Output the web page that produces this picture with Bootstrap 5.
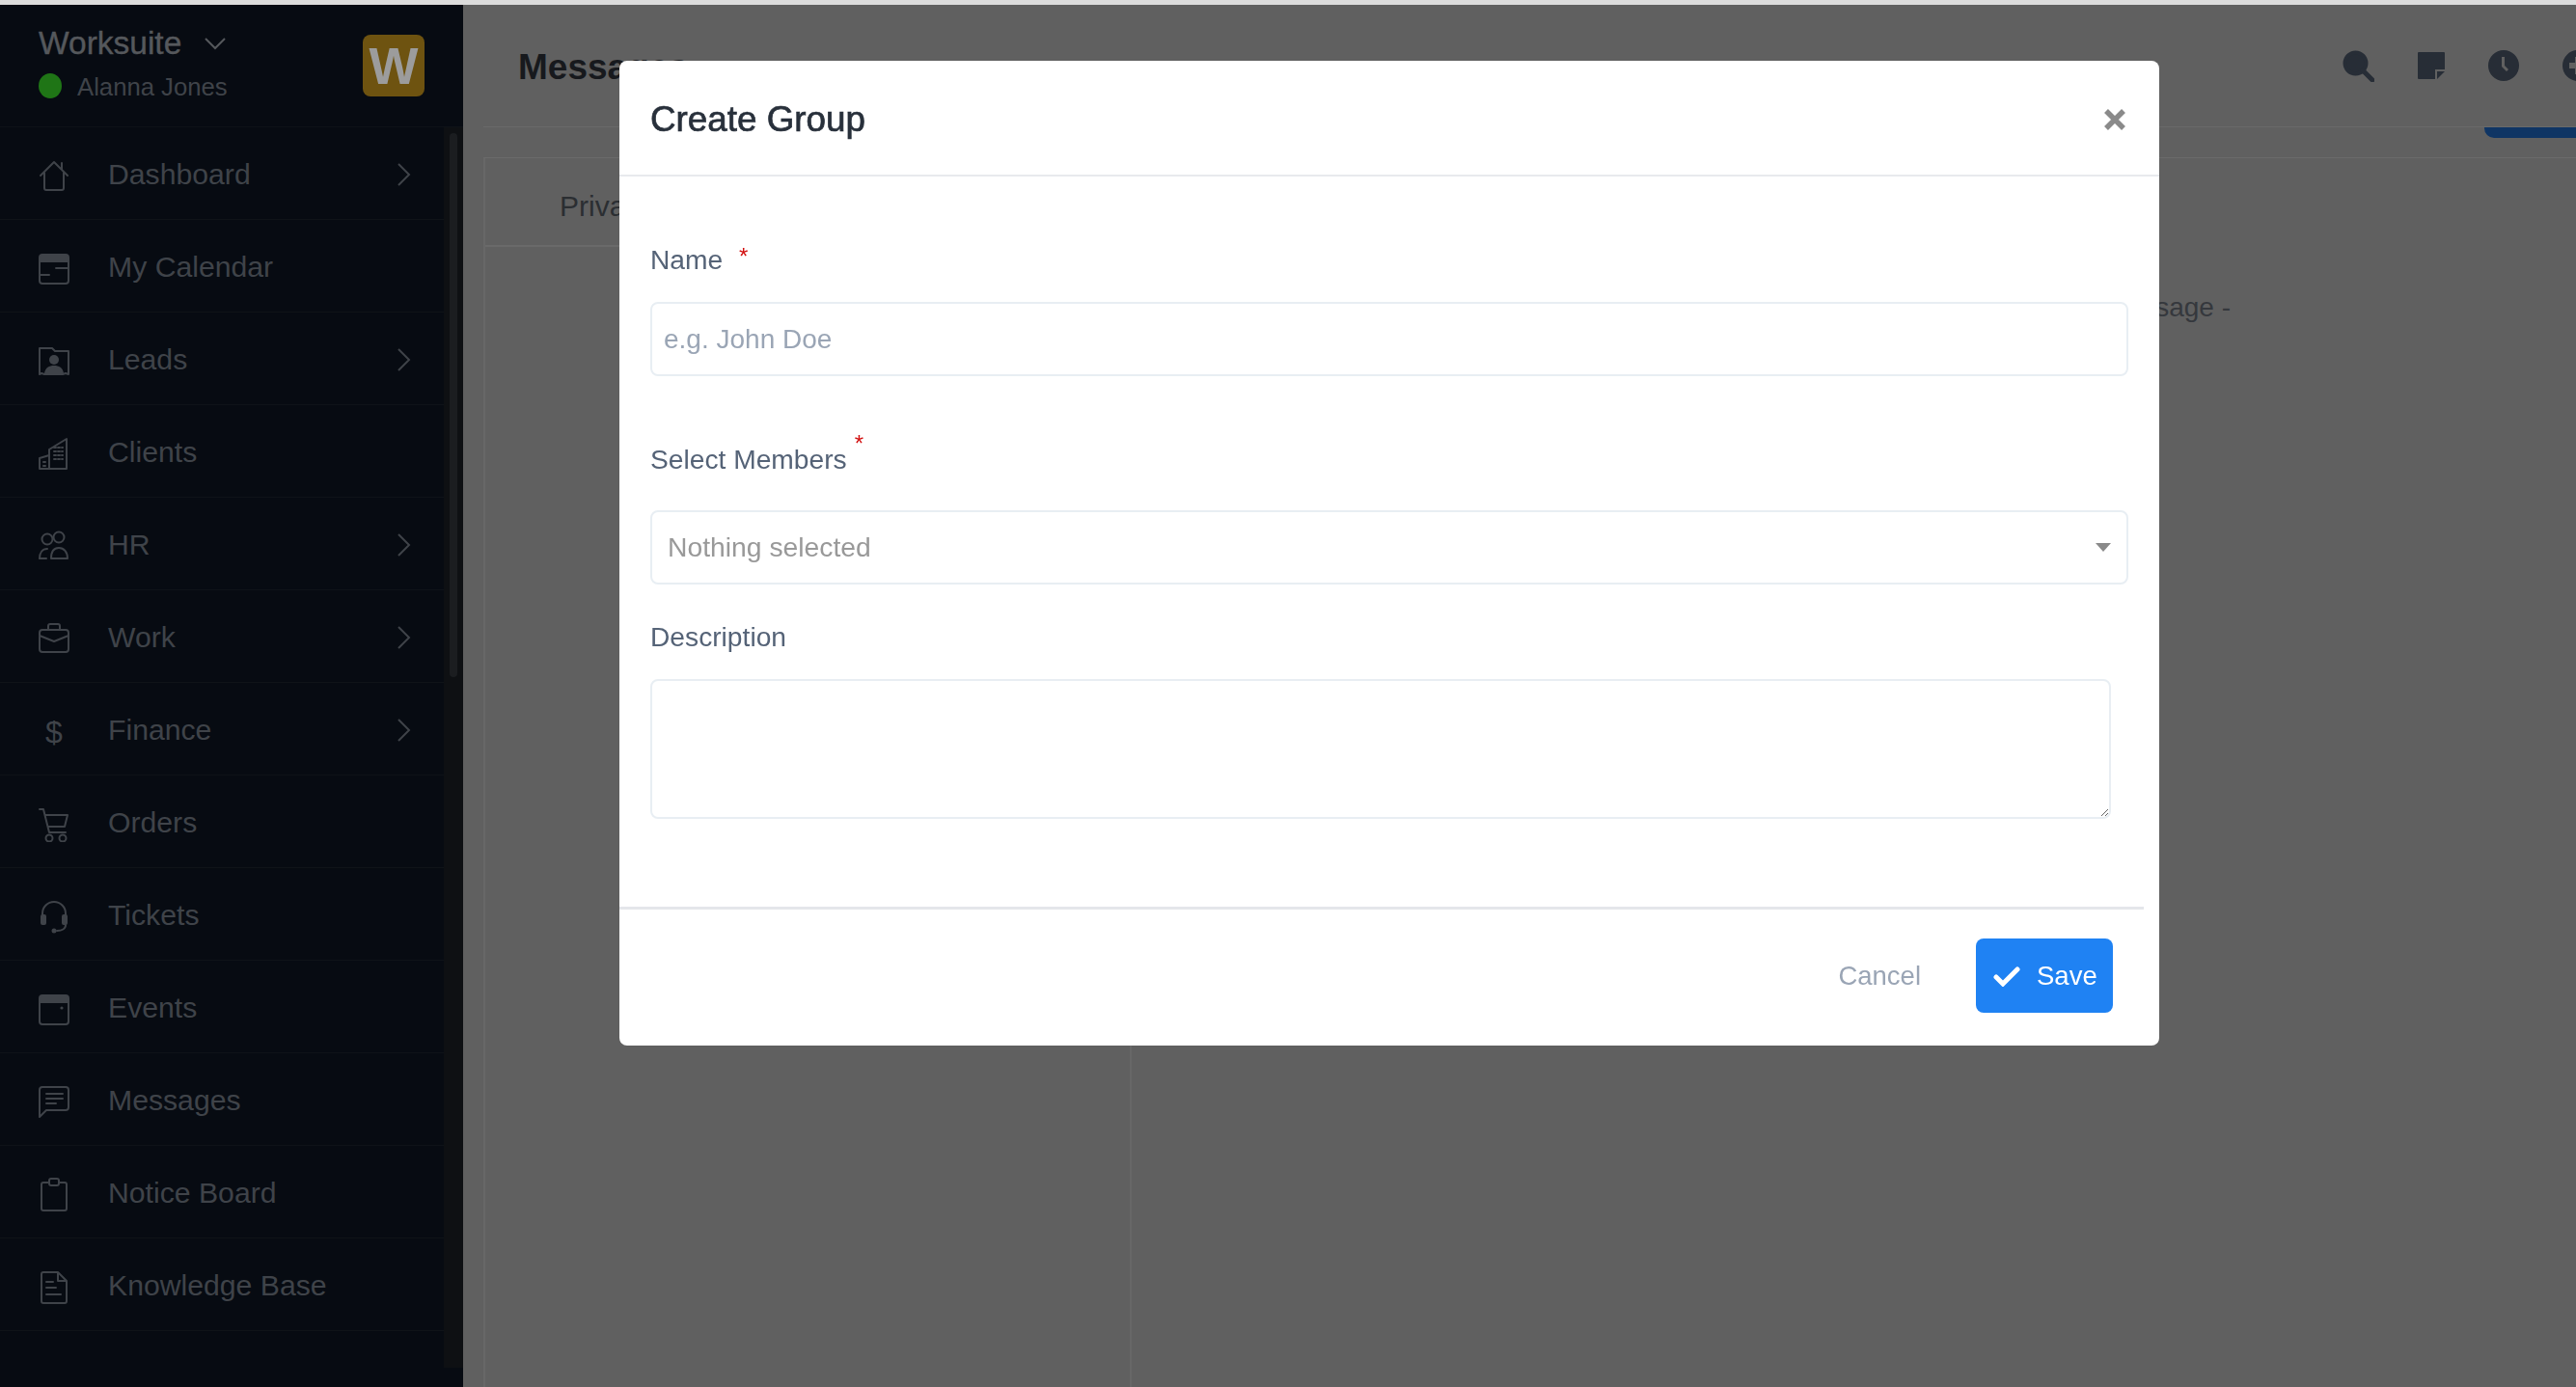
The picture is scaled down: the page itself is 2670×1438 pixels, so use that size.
<!DOCTYPE html>
<html lang="en">
<head>
<meta charset="utf-8">
<title>Create Group</title>
<link href="https://cdn.jsdelivr.net/npm/bootstrap@5.3.0/dist/css/bootstrap.min.css" rel="stylesheet">
<style>
html,body{height:1438px;overflow:hidden}
body{background:#606060;font-family:"Liberation Sans",Arial,sans-serif;font-size:28px;color:#3c3f44}
.topstrip{height:5px;background:#dcdcdc}
.shell{height:1433px}
.sidebox{width:480px;background:#070b12;flex:none}
.sidehead{height:127px;padding:0 40px;border-bottom:1px solid #0e1218}
.brandname{font-size:33.5px;line-height:40px;color:#55585c;-webkit-text-stroke:.4px #55585c;padding-top:2px}
.username{font-size:25.7px;line-height:30px;color:#3f4349;margin-top:10px}
.onlinedot{width:24px;height:26px;border-radius:50%;background:#1f7516;margin-right:16px;margin-top:-3px}
.brandlogo{width:64px;height:64px;border-radius:8px;background:#6e5310;color:#9c9c9c;font-size:54px;line-height:64px;text-align:center;font-family:"Liberation Sans",sans-serif;font-weight:700}
.navwrap{height:1286px;background:#0e1013}
.navlist{width:460px;background:#070b12}
.navrow{height:96px;border-bottom:1px solid #0f1318;padding:2px 34px 0 40px;color:#3f4349;font-size:30.2px}
.navico{width:32px;height:36px;margin-top:5px;margin-right:40px;flex:none;fill:none;stroke:#3f4349;stroke-width:2;stroke-linecap:round;stroke-linejoin:round}
.navico .solid{fill:#3f4349;stroke:none}
.dollar{width:32px;margin-top:5px;margin-right:40px;text-align:center;font-size:32px;flex:none;line-height:36px}
.thumbtrack{width:20px;padding:6px 6px 0}
.thumb{height:564px;width:8px;border-radius:4px;background:#1b1d20}
.mainbox{min-width:0;overflow:hidden}
.mainhead{height:126px;padding:4px 0 0 57px}
.pagetitle{font-size:37px;font-weight:700;color:#17191d;margin:0;line-height:1.2}
.topicons{margin-right:-18px;gap:45px;padding-bottom:4px}
.topic{fill:#272d36;flex:none}
.tabbar{height:33px;margin-left:21px;border-top:1px solid #6a6a6a;border-bottom:1px solid #6a6a6a}
.bluetab{width:95px;height:11px;background:#0f3564;border-radius:0 0 0 10px}
.contentrow{height:1274px;margin-left:21px}
.leftcol{width:672px;border-left:2px solid #676767;border-right:2px solid #676767;flex:none}
.privrow{height:92px;border-bottom:2px solid #6a6a6a;padding-left:77px;color:#2b2e32;font-size:30px;line-height:100px}
.rightcol{padding:134px 358px 0 0;color:#35383d;font-size:28px;line-height:42px}
.groupmodal{position:fixed;left:642px;top:63px;width:1596px;height:1021px;z-index:1055;background:#fff;border-radius:8px;overflow:hidden}
.grouphead{height:120px;padding:4px 35px 0 32px;border-bottom:2px solid #e8eaed}
.grouptitle{font-size:36.8px;font-weight:400;-webkit-text-stroke:.7px #28303b;color:#28303b;margin:0;line-height:1.2}
.xbtn{border:0;background:none;padding:0;line-height:0}
.groupbody{padding:69px 32px 0 32px;height:757px}
.fieldlabel{display:block;font-size:28.2px;line-height:34px;color:#556377;margin:0}
.req{color:#d21010;font-size:24px;line-height:1;position:relative;top:-5px;margin-left:9px}
.req2{margin-left:8px;top:-18px}
.fieldinput{height:77px;border:2px solid #e8eef3;border-radius:8px;font-size:28px;padding:0 12px;color:#28303b;box-shadow:none}
.fieldinput::placeholder{color:#9aa5b5}
.pickbtn{height:77px;width:100%;border:2px solid #e8eef3;border-radius:8px;background:#fff;color:#999;font-size:28.3px;padding:0 16px;text-align:left}
.pickbtn::after{border-top:.32em solid #8a8a8a;border-right:.29em solid transparent;border-left:.29em solid transparent;border-bottom:0;margin:0}
.areainput{width:1514px;height:145px;border:2px solid #e8eef3;border-radius:8px;display:block;box-shadow:none}
.gap27{margin-top:27px}.gap36{margin-top:36px}.gap37{margin-top:37px}.gap68{margin-top:69px}
.groupfoot{height:144px;margin-right:16px;border-top:3px solid #e4e6ea;padding:30px 32px 0 0;gap:57px}
.cancellink{color:#9aa5b5;font-size:27.5px;line-height:77px;text-decoration:none}
.savebtn{width:142px;height:77px;background:#1f82f3;border:0;border-radius:8px;color:#fff;font-size:27.5px;padding:0 0 0 18px;gap:17px}
</style>
</head>
<body>
<div class="topstrip"></div>
<div class="shell d-flex">
  <aside class="sidebox">
    <div class="sidehead d-flex justify-content-between align-items-center">
      <div class="mb-2">
        <div class="brandname d-flex align-items-center">Worksuite
          <svg class="ms-4" width="22" height="14" viewBox="0 0 22 14" fill="none" stroke="#55585c" stroke-width="2"><path d="M1 2l10 10L21 2"/></svg>
        </div>
        <div class="username d-flex align-items-center"><span class="onlinedot"></span>Alanna Jones</div>
      </div>
      <div class="brandlogo">W</div>
    </div>
    <div class="navwrap d-flex">
      <nav class="navlist">
        <a class="navrow d-flex align-items-center text-decoration-none">
          <svg class="navico" viewBox="0 0 32 36"><path d="M2 17L16 3l14 14M6 14v16a2 2 0 0 0 2 2h16a2 2 0 0 0 2-2V14M24 4v7"/></svg>
          <span class="flex-grow-1">Dashboard</span>
          <svg width="14" height="24" viewBox="0 0 14 24" fill="none" stroke="#3f4349" stroke-width="2"><path d="M1 1l11 11L1 23"/></svg>
        </a>
        <a class="navrow d-flex align-items-center text-decoration-none">
          <svg class="navico" viewBox="0 0 32 36"><rect x="1" y="3" width="30" height="30" rx="3"/><path class="solid" d="M1 6a3 3 0 0 1 3-3h24a3 3 0 0 1 3 3v5H1z"/><path d="M18 17h12M2 24h9"/></svg>
          <span class="flex-grow-1">My Calendar</span>
        </a>
        <a class="navrow d-flex align-items-center text-decoration-none">
          <svg class="navico" viewBox="0 0 32 36"><path d="M1 31V4h13l3 3h14v24l-3-1-3 1H6l-3-1z"/><circle class="solid" cx="16" cy="16" r="5"/><path class="solid" d="M6 30c1-6 5-8 10-8s9 2 10 8z"/></svg>
          <span class="flex-grow-1">Leads</span>
          <svg width="14" height="24" viewBox="0 0 14 24" fill="none" stroke="#3f4349" stroke-width="2"><path d="M1 1l11 11L1 23"/></svg>
        </a>
        <a class="navrow d-flex align-items-center text-decoration-none">
          <svg class="navico" viewBox="0 0 32 36"><path d="M1 33V22l10-3v14M11 33V13L29 2v31H1"/><path d="M16 15h9M16 19h9M16 23h9M16 11h9M5 26h3M5 30h3" stroke-dasharray="2 2"/></svg>
          <span class="flex-grow-1">Clients</span>
        </a>
        <a class="navrow d-flex align-items-center text-decoration-none">
          <svg class="navico" viewBox="0 0 32 36"><circle cx="9" cy="10" r="5.5"/><circle cx="21" cy="8" r="5.5"/><path d="M1 30c0-6 3-10 8-10M13 30c0-7 3-11 8-11s9 4 9 11z"/><path d="M1 30h7"/></svg>
          <span class="flex-grow-1">HR</span>
          <svg width="14" height="24" viewBox="0 0 14 24" fill="none" stroke="#3f4349" stroke-width="2"><path d="M1 1l11 11L1 23"/></svg>
        </a>
        <a class="navrow d-flex align-items-center text-decoration-none">
          <svg class="navico" viewBox="0 0 32 36"><rect x="1" y="8" width="30" height="23" rx="3"/><path d="M10 8V4a2 2 0 0 1 2-2h8a2 2 0 0 1 2 2v4M1 14l15 6 15-6"/></svg>
          <span class="flex-grow-1">Work</span>
          <svg width="14" height="24" viewBox="0 0 14 24" fill="none" stroke="#3f4349" stroke-width="2"><path d="M1 1l11 11L1 23"/></svg>
        </a>
        <a class="navrow d-flex align-items-center text-decoration-none">
          <span class="dollar">$</span>
          <span class="flex-grow-1">Finance</span>
          <svg width="14" height="24" viewBox="0 0 14 24" fill="none" stroke="#3f4349" stroke-width="2"><path d="M1 1l11 11L1 23"/></svg>
        </a>
        <a class="navrow d-flex align-items-center text-decoration-none">
          <svg class="navico" viewBox="0 0 32 36"><path d="M1 2h4l6 24h17M7 8h23l-3 12H10"/><circle cx="11" cy="32" r="3.5"/><circle cx="25" cy="32" r="3.5"/></svg>
          <span class="flex-grow-1">Orders</span>
        </a>
        <a class="navrow d-flex align-items-center text-decoration-none">
          <svg class="navico" viewBox="0 0 32 36"><path d="M4 18V14a12 12 0 0 1 24 0v4M28 26c0 4-4 6-9 6"/><rect class="solid" x="2" y="15" width="6" height="11" rx="2"/><rect class="solid" x="24" y="15" width="6" height="11" rx="2"/><circle class="solid" cx="16" cy="32" r="2.5"/></svg>
          <span class="flex-grow-1">Tickets</span>
        </a>
        <a class="navrow d-flex align-items-center text-decoration-none">
          <svg class="navico" viewBox="0 0 32 36"><rect x="1" y="3" width="30" height="30" rx="3"/><path class="solid" d="M1 6a3 3 0 0 1 3-3h24a3 3 0 0 1 3 3v5H1z"/><circle class="solid" cx="24" cy="16" r="1.6"/></svg>
          <span class="flex-grow-1">Events</span>
        </a>
        <a class="navrow d-flex align-items-center text-decoration-none">
          <svg class="navico" viewBox="0 0 32 36"><path d="M1 33V5a3 3 0 0 1 3-3h24a3 3 0 0 1 3 3v18a3 3 0 0 1-3 3H8z"/><path d="M8 9h17M8 14h17M8 19h10"/></svg>
          <span class="flex-grow-1">Messages</span>
        </a>
        <a class="navrow d-flex align-items-center text-decoration-none">
          <svg class="navico" viewBox="0 0 32 36"><path d="M10 5H5a2 2 0 0 0-2 2v25a2 2 0 0 0 2 2h22a2 2 0 0 0 2-2V7a2 2 0 0 0-2-2h-5"/><rect x="11" y="1" width="10" height="7" rx="2"/></svg>
          <span class="flex-grow-1">Notice Board</span>
        </a>
        <a class="navrow d-flex align-items-center text-decoration-none">
          <svg class="navico" viewBox="0 0 32 36"><path d="M20 2H5a2 2 0 0 0-2 2v28a2 2 0 0 0 2 2h22a2 2 0 0 0 2-2V11zM20 2v9h9"/><path d="M8 12h7M8 18h10M8 25h15"/></svg>
          <span class="flex-grow-1">Knowledge Base</span>
        </a>
      </nav>
      <div class="thumbtrack"><div class="thumb"></div></div>
    </div>
  </aside>
  <main class="mainbox flex-grow-1">
    <header class="mainhead d-flex align-items-center justify-content-between">
      <h1 class="pagetitle">Messages</h1>
      <div class="topicons d-flex align-items-center">
        <svg class="topic" width="33" height="33" viewBox="0 0 33 33" fill="none" stroke="#272d36" stroke-width="4"><circle cx="13.5" cy="13.5" r="11"/><path d="M21 21l10 10" stroke-width="5" stroke-linecap="round"/></svg>
        <svg class="topic" width="28" height="28" viewBox="0 0 28 28"><path d="M1 0h26a1 1 0 0 1 1 1v17H18v10H1a1 1 0 0 1-1-1V1a1 1 0 0 1 1-1zM20 20h8l-8 8z"/></svg>
        <svg class="topic" width="32" height="32" viewBox="0 0 32 32"><path fill-rule="evenodd" d="M16 0a16 16 0 1 1 0 32 16 16 0 0 1 0-32zm-2 7v10l5 5 2-2-4-4V7z"/></svg>
        <svg class="topic" width="32" height="32" viewBox="0 0 32 32"><path fill-rule="evenodd" d="M16 0a16 16 0 1 1 0 32 16 16 0 0 1 0-32zm-3 7v6H7v6h6v6h6v-6h6v-6h-6V7z"/></svg>
      </div>
    </header>
    <div class="tabbar d-flex justify-content-end"><div class="bluetab"></div></div>
    <div class="contentrow d-flex">
      <div class="leftcol"><div class="privrow">Private</div></div>
      <div class="rightcol flex-grow-1 text-end">Select from the list to send a new message -</div>
    </div>
  </main>
</div>

<section class="groupmodal" role="dialog" aria-label="Create Group">
  <div class="grouphead d-flex align-items-center justify-content-between">
    <h5 class="grouptitle">Create Group</h5>
    <button type="button" class="xbtn" aria-label="Close"><svg width="22" height="22" viewBox="0 0 22 22" stroke="#8a8a8a" stroke-width="5.5"><path d="M2 2l18 18M20 2L2 20"/></svg></button>
  </div>
  <form class="groupbody">
    <label class="fieldlabel">Name <span class="req">*</span></label>
    <input type="text" class="form-control fieldinput gap27" placeholder="e.g. John Doe">
    <label class="fieldlabel gap68">Select Members<span class="req req2">*</span></label>
    <button type="button" class="pickbtn dropdown-toggle d-flex align-items-center justify-content-between gap36">Nothing selected</button>
    <label class="fieldlabel gap37">Description</label>
    <textarea class="form-control areainput gap27"></textarea>
  </form>
  <div class="groupfoot d-flex justify-content-end align-items-start">
    <a class="cancellink">Cancel</a>
    <button type="button" class="savebtn d-flex align-items-center">
      <svg width="28" height="22" viewBox="0 0 28 22" fill="none" stroke="#fff" stroke-width="5" stroke-linecap="round"><path d="M3 12l7 7L25 4"/></svg>
      Save
    </button>
  </div>
</section>
<script src="https://cdn.jsdelivr.net/npm/bootstrap@5.3.0/dist/js/bootstrap.bundle.min.js"></script>
</body>
</html>
